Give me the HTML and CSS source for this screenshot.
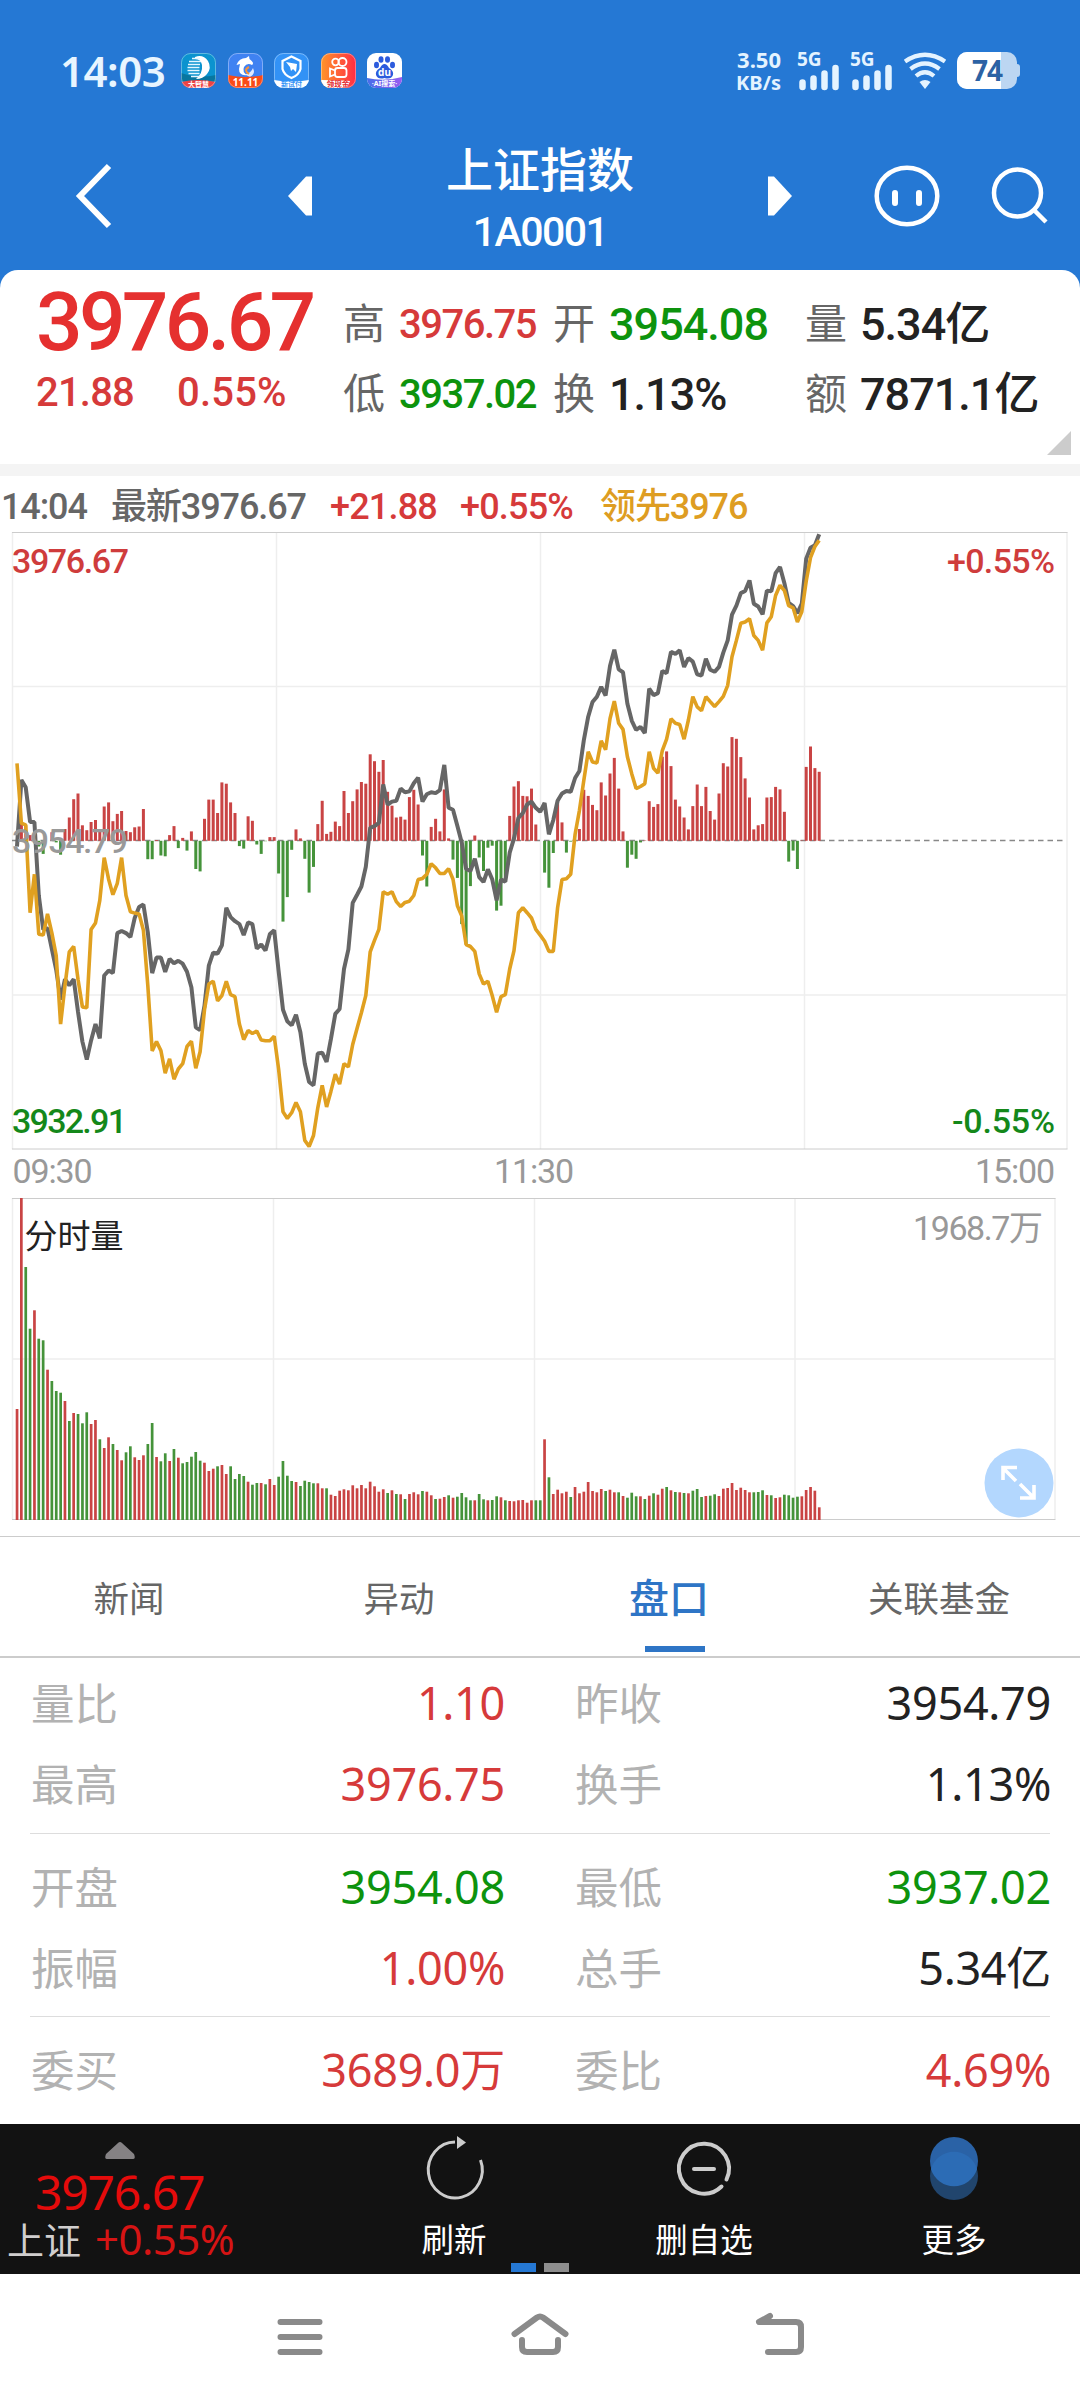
FILE: index.html
```html
<!DOCTYPE html>
<html lang="zh-CN">
<head>
    <meta charset="UTF-8">
    <meta name="viewport" content="width=device-width, initial-scale=1.0">
    <title>上证指数 1A0001</title>
    <link rel="stylesheet" href="styles.css">
</head>
<body>
    <header>
        <div class="status-bar">
            <span class="clock">14:03</span>
            <div class="app-icons">
                <svg viewBox="0 0 35 35">
                    <defs><clipPath id="round"><rect width="35" height="35" rx="9"/></clipPath></defs>
                    <g clip-path="url(#round)">
                        <rect width="35" height="35" fill="#0b93cf"/>
                        <path d="M0 20 Q17 26 35 22 V28 H0z" fill="#08769f"/>
                        <path d="M14 4 Q22 1 27 8 Q31 15 26 21 Q22 26 15 26 Q22 20 21 12 Q20 6 14 6z" fill="#fff"/>
                        <path d="M11 5.500h8M8 8.500h12M7 11.500h12M6.500 14.500h12M6.500 17.500h12M7.500 20.500h11M10 23.500h9" stroke="#e4f6ff" stroke-width="1.700"/>
                        <path d="M0 29 Q17 25 35 29 V35 H0z" fill="#ed4345"/>
                        <text x="17.500" y="33.500" class="tiny">大智慧</text>
                    </g>
                    <rect x=".5" y=".5" width="34" height="34" rx="9" class="rim"/>
                </svg>
                <svg viewBox="0 0 35 35">
                    <g clip-path="url(#round)">
                        <rect width="35" height="35" fill="#3f82f2"/>
                        <path d="M8.500 12 Q11 5 18 5 L21 3 L21.500 6 Q27 10 24 12 Q19 9.500 16 14 Q14 19 19 22 Q11 23 11 16 L12 11z" fill="#fff"/>
                        <path d="M25 15 Q28 21 22 24 L17 21.500 Q23 20 25 15z" fill="#dfe9ff"/>
                        <path d="M21 14 Q15 17 21 21" fill="none" stroke="#f7923a" stroke-width="2"/>
                        <path d="M0 22 Q17 26 35 22 V35 H0z" fill="#fa4b17"/>
                        <text x="17.500" y="32.500" class="tiny big">11.11</text>
                    </g>
                    <rect x=".5" y=".5" width="34" height="34" rx="9" class="rim"/>
                </svg>
                <svg viewBox="0 0 35 35">
                    <g clip-path="url(#round)">
                        <rect width="35" height="35" fill="#3292f6"/>
                        <path d="M17.500 3.500 L26.500 8 V16 Q25 22 17.500 25 Q10 22 8.500 16 V8z" fill="none" stroke="#fff" stroke-width="2.200"/>
                        <path d="M12 9 L23 11 L22 19 L19 16 L17 18 L16 14z" fill="#fff"/>
                        <path d="M0 27 Q17 30 35 27 V35 H0z" fill="#fff"/>
                        <text x="17.500" y="33.500" class="tiny blue">新试付</text>
                    </g>
                    <rect x=".5" y=".5" width="34" height="34" rx="9" class="rim"/>
                </svg>
                <svg viewBox="0 0 35 35">
                    <defs><linearGradient id="warm" x2="1"><stop stop-color="#ff9528"/><stop offset="1" stop-color="#ff2c45"/></linearGradient></defs>
                    <g clip-path="url(#round)">
                        <rect width="35" height="35" fill="url(#warm)"/>
                        <circle cx="14.500" cy="9" r="3.300" class="line"/>
                        <circle cx="21.500" cy="9" r="4" class="line"/>
                        <rect x="14" y="15" width="11.500" height="9" rx="2.500" class="line"/>
                        <path d="M14 17.500 L9 15.500 V23.500 L14 21.500" class="line"/>
                        <path d="M0 27 Q12 27 29 28 L26 35 H0z" fill="#fff"/>
                        <text x="17" y="33.800" class="tiny red">领现金</text>
                    </g>
                    <rect x=".5" y=".5" width="34" height="34" rx="9" class="rim"/>
                </svg>
                <svg viewBox="0 0 35 35">
                    <defs><linearGradient id="cool" x2="1"><stop stop-color="#456eea"/><stop offset="1" stop-color="#9a5cf0"/></linearGradient></defs>
                    <g clip-path="url(#round)">
                        <rect width="35" height="35" fill="#fff"/>
                        <g fill="#2c5bdd">
                            <ellipse cx="9.500" cy="12" rx="2.500" ry="3.300"/>
                            <ellipse cx="14" cy="6.500" rx="2.500" ry="3.300"/>
                            <ellipse cx="20.500" cy="6.500" rx="2.500" ry="3.300"/>
                            <ellipse cx="25.500" cy="12" rx="2.500" ry="3.300"/>
                            <path d="M17.500 11 Q20 11 22 15 Q27 18 26 22 Q24 27 17.500 25 Q11 27 9 22 Q8 18 13 15 Q15 11 17.500 11z"/>
                        </g>
                        <text x="17.500" y="22.500" class="tiny big">du</text>
                        <path d="M0 25 Q17 29 35 24 V35 H0z" fill="url(#cool)"/>
                        <text x="17.500" y="33" class="tiny">·AI搜索·</text>
                    </g>
                </svg>
            </div>
            <div class="status-right">
                <div class="speed"><span>3.50</span><span>KB/s</span></div>
                <svg class="signal" viewBox="0 0 43 40">
                    <text x="0" y="15">5G</text>
                    <path d="M5.500 31.500v4.500M16.500 27.500v8.500M27.500 22.500v13.500M38.500 17v19"/>
                </svg>
                <svg class="signal" viewBox="0 0 43 40">
                    <text x="0" y="15">5G</text>
                    <path d="M5.500 31.500v4.500M16.500 27.500v8.500M27.500 22.500v13.500M38.500 17v19"/>
                </svg>
                <svg class="wifi" viewBox="0 0 44 37">
                    <path d="M2 9.500 Q22 -4 42 9.500M7.500 17 Q22 6 36.500 17M13 24 Q22 16.500 31 24" fill="none" stroke="#e4f3ff" stroke-width="4.200"/>
                    <path d="M16.500 30 Q22 26 27.500 30 L22 37z" fill="#e4f3ff"/>
                </svg>
                <div class="battery"><span class="battery-level"></span><b>74</b></div>
            </div>
        </div>
        <div class="title-bar">
            <svg class="back" viewBox="0 0 40 66"><path d="M34 3 L5 33 L34 63"/></svg>
            <svg class="arrow prev" viewBox="0 0 24 40"><path d="M0 20 L18 .5 H24 V39.500 H18z"/></svg>
            <div class="title">
                <h1>上证指数</h1>
                <p>1A0001</p>
            </div>
            <svg class="arrow next" viewBox="0 0 24 40"><path d="M24 20 L6 .5 H0 V39.500 H6z"/></svg>
            <svg class="robot" viewBox="0 0 66 62">
                <ellipse cx="33" cy="31" rx="30.300" ry="28.300"/>
                <path d="M21 28v10M45 28v10"/>
            </svg>
            <svg class="search" viewBox="0 0 58 60"><circle cx="26.500" cy="27" r="23.500"/><path d="M42.500 43.500 L55 56"/></svg>
        </div>
    </header>

    <section class="quote">
        <div class="quote-main">
            <div class="price">3976.67</div>
            <div class="change"><span>21.88</span><span class="percent">0.55%</span></div>
        </div>
        <dl class="quote-grid">
            <dt>高</dt><dd class="up small">3976.75</dd>
            <dt>开</dt><dd class="down">3954.08</dd>
            <dt>量</dt><dd>5.34亿</dd>
            <dt>低</dt><dd class="down small">3937.02</dd>
            <dt>换</dt><dd>1.13%</dd>
            <dt>额</dt><dd>7871.1亿</dd>
        </dl>
        <svg class="expand-corner" viewBox="0 0 24 24"><path d="M24 0 V24 H0z"/></svg>
    </section>

    <div class="chart-info">
        <span>14:04</span>
        <span>最新3976.67</span>
        <span class="up">+21.88</span>
        <span class="up">+0.55%</span>
        <span class="info-lead">领先3976</span>
    </div>

    <svg class="price-chart" viewBox="0 532 1080 658">
        <path class="grid-line" d="M12.500 686.500H1067M12.500 995H1067M12.500 532V1149M276.500 532V1149M540.500 532V1149M804.500 532V1149M1067 532V1149"/>
        <path class="frame-line" d="M12 532.500H1067.500M12 1149H1067.500"/>
        <path class="zero-line" d="M12 840.500H1063"/>
        <g id="momentum"></g>
        <polyline id="priceLine" class="price-line"/>
        <polyline id="leadLine" class="lead-line"/>
        <text x="12" y="573" textLength="117" class="red">3976.67</text>
        <text x="12" y="852.500" textLength="116" class="gray">3954.79</text>
        <text x="12" y="1132.500" textLength="115" class="green">3932.91</text>
        <text x="947" y="573" textLength="108" class="red">+0.55%</text>
        <text x="952" y="1132.500" textLength="103" class="green">-0.55%</text>
        <text x="12.500" y="1182.500" textLength="80" class="axis">09:30</text>
        <text x="494" y="1182.500" textLength="80" class="axis">11:30</text>
        <text x="975" y="1182.500" textLength="80" class="axis">15:00</text>
    </svg>

    <svg class="volume-chart" viewBox="0 1190 1080 346">
        <path class="grid-line" d="M12.500 1359H1055M12.500 1198V1519M273.500 1198V1519M534.500 1198V1519M795 1198V1519M1055 1198V1519"/>
        <path class="frame-line" d="M12 1198.500H1055.500M12 1519.500H1055.500"/>
        <g id="volume"></g>
        <text x="24.500" y="1247.500" class="label">分时量</text>
        <text x="913" y="1239.500" textLength="130" class="axis">1968.7万</text>
        <circle cx="1019" cy="1483" r="34.500" fill="#b3d7fe"/>
        <path class="zoom-arrows" d="M1003 1480V1467.500H1017M1003 1468L1016 1481M1034 1485V1498H1020M1034 1498L1020 1484"/>
    </svg>

    <nav class="tabs">
        <a href="#">新闻</a>
        <a href="#">异动</a>
        <a href="#" class="active">盘口</a>
        <a href="#">关联基金</a>
    </nav>

    <main>
        <div class="rows">
            <span>量比</span><b class="up">1.10</b><span>昨收</span><b>3954.79</b>
            <span>最高</span><b class="up">3976.75</b><span>换手</span><b>1.13%</b>
        </div>
        <div class="rows">
            <span>开盘</span><b class="down">3954.08</b><span>最低</span><b class="down">3937.02</b>
            <span>振幅</span><b class="up">1.00%</b><span>总手</span><b>5.34亿</b>
        </div>
        <div class="rows">
            <span>委买</span><b class="up">3689.0万</b><span>委比</span><b class="up">4.69%</b>
        </div>
    </main>

    <footer class="toolbar">
        <div class="index-box">
            <svg viewBox="0 0 30 17"><path d="M15 0 Q16 0 17 1 L29 12 Q31 17 28 17 H2 Q-1 17 1 12 L13 1 Q14 0 15 0z" fill="#858284"/></svg>
            <strong>3976.67</strong>
            <p>上证<span>+0.55%</span></p>
        </div>
        <div class="tool">
            <svg viewBox="0 0 62 66">
                <path d="M32 5 A27 28 0 1 0 57.500 23" fill="none" stroke="#ccc" stroke-width="3"/>
                <path d="M34 -1 L43 5.500 L34 12z" fill="#ccc"/>
            </svg>
            <span>刷新</span>
        </div>
        <div class="tool">
            <svg viewBox="0 0 62 66">
                <path d="M53.500 42.500 A25 25 0 1 0 48.500 49.500" fill="none" stroke="#ccc" stroke-width="4" stroke-linecap="round"/>
                <path d="M21 32 H41" stroke="#ccc" stroke-width="4" stroke-linecap="round"/>
            </svg>
            <span>删自选</span>
        </div>
        <div class="tool">
            <svg viewBox="0 0 62 66">
                <circle cx="31" cy="39" r="24" fill="#21456d"/>
                <circle cx="31" cy="24" r="24" fill="#2a62a6"/>
                <path d="M8 32 A24 24 0 0 1 54 32 A24 24 0 0 1 8 32z" fill="#2c6cb5"/>
            </svg>
            <span>更多</span>
        </div>
        <div class="pager"><i class="on"></i><i></i></div>
    </footer>

    <div class="system-nav">
        <svg viewBox="0 0 60 50"><path d="M10.500 10H49.500M10.500 25H49.500M10.500 40H49.500"/></svg>
        <svg viewBox="0 0 60 50"><path d="M4.500 22 L27 5.500 Q30 3.500 33 5.500 L55.500 22M12 28V35Q12 40 17 40H43Q48 40 48 35V28"/></svg>
        <svg viewBox="0 0 60 50"><path d="M20 4 L9 10 H46Q51 10 51 15V35Q51 40 46 40H18"/></svg>
    </div>

    <script src="chart.js"></script>
</body>
</html>
```

FILE: styles.css
```css
* {
    box-sizing: border-box;
}
body {
    margin: 0;
    width: 1080px;
    height: 2400px;
    background-color: #fff;
    color: #222;
    font-family: "Noto Sans", "Noto Sans CJK SC", sans-serif;
    overflow: hidden;
}
svg {
    display: block;
    flex: none;
    overflow: visible;
}
h1, p, dl, dd {
    margin: 0;
}
header {
    height: 290px;
    background-color: #2578d4;
    color: #fff;
}
.up {
    color: #d63a3a;
}
.down {
    color: #0d930d;
}

/* status bar */
.status-bar {
    display: flex;
    align-items: center;
    height: 141px;
    padding: 0 63px 0 60px;
}
.clock {
    width: 121px;
    font-size: 42px;
    font-weight: 600;
    letter-spacing: -0.5px;
    color: #e8f5ff;
}
.app-icons {
    display: flex;
    gap: 11.600px;
}
.app-icons svg {
    width: 35px;
    height: 35px;
}
.tiny {
    font-size: 7px;
    font-weight: 700;
    fill: #fff;
    text-anchor: middle;
}
.tiny.big {
    font-size: 10px;
}
.tiny.blue {
    fill: #3292f6;
}
.tiny.red {
    font-size: 7.5px;
    fill: #e3262c;
}
.line {
    fill: none;
    stroke: #fff;
    stroke-width: 1.8;
}
.rim {
    fill: none;
    stroke: rgba(255, 255, 255, 0.35);
}
.status-right {
    display: flex;
    align-items: center;
    margin-left: auto;
}
.speed {
    display: flex;
    flex-direction: column;
    width: 60px;
    margin-right: 16px;
    text-align: right;
    font-size: 20px;
    font-weight: 700;
    line-height: 23px;
    color: #e4f3ff;
}
.speed span:first-child {
    font-size: 22px;
}
.signal {
    width: 43px;
    height: 40px;
    margin-right: 10px;
}
.signal text {
    font-size: 19px;
    font-weight: 700;
    fill: #e4f3ff;
}
.signal path {
    stroke: #e4f3ff;
    stroke-width: 6.5;
    stroke-linecap: round;
}
.wifi {
    width: 44px;
    height: 37px;
    margin-right: 10px;
}
.battery {
    position: relative;
    width: 60px;
    height: 37px;
    border-radius: 10px;
    background-color: #bcd6f2;
    text-align: center;
    line-height: 37px;
    font-size: 28px;
    color: #2c62a4;
}
.battery b {
    position: relative;
    font-weight: 700;
    letter-spacing: -1px;
}
.battery-level {
    position: absolute;
    left: 0;
    top: 0;
    width: 44px;
    height: 37px;
    border-radius: 10px 0 0 10px;
    background-color: #fff;
}
.battery::after {
    content: "";
    position: absolute;
    right: -3px;
    top: 12px;
    width: 4px;
    height: 13px;
    border-radius: 0 3px 3px 0;
    background-color: #bcd6f2;
}

/* title */
.title-bar {
    display: flex;
    align-items: center;
    height: 109px;
    padding-left: 75px;
}
.back {
    width: 40px;
    height: 66px;
}
.back path, .robot ellipse, .robot path, .search circle, .search path {
    fill: none;
    stroke: #fff;
    stroke-width: 4.5;
}
.back path {
    stroke-width: 6;
}
.robot path {
    stroke-width: 6;
    stroke-linecap: round;
}
.arrow {
    width: 24px;
    height: 40px;
    fill: #fff;
}
.prev {
    margin-left: 173px;
}
.title {
    width: 456px;
    padding-top: 13px;
    text-align: center;
}
.title h1 {
    font-size: 47px;
    font-weight: 500;
    line-height: 60px;
}
.title p {
    font-family: Roboto, sans-serif;
    font-size: 41px;
    font-weight: 500;
    line-height: 66px;
    letter-spacing: -1.5px;
}
.robot {
    width: 66px;
    height: 62px;
    margin-left: 82px;
}
.search {
    width: 58px;
    height: 60px;
    margin-left: 51px;
}

/* quote card */
.quote {
    position: relative;
    display: flex;
    height: 206px;
    margin-top: -20px;
    padding-left: 36px;
    border-bottom: 12px solid #f4f4f4;
    border-radius: 18px 18px 0 0;
    background-color: #fff;
    font-family: Roboto, "Noto Sans CJK SC", sans-serif;
    font-weight: 500;
}
.quote-main {
    width: 307px;
}
.price {
    height: 93px;
    padding-top: 6px;
    font-size: 82px;
    line-height: 92px;
    letter-spacing: -3.7px;
    color: #e5302f;
}
.change {
    display: grid;
    grid-template-columns: 141px auto;
    height: 60px;
    font-size: 40px;
    line-height: 60px;
    letter-spacing: -0.8px;
    color: #d63a3a;
}
.percent {
    letter-spacing: 0.2px;
}
.quote-grid {
    display: grid;
    grid-template-columns: 56px 154px 56px 196px 55px auto;
    grid-template-rows: 70px 70px;
    padding-top: 20px;
    font-size: 45px;
    line-height: 70px;
    white-space: nowrap;
}
.quote-grid dt {
    font-size: 42px;
    font-weight: 400;
    color: #666;
}
.quote-grid dd {
    letter-spacing: -1px;
}
.quote-grid .small {
    font-size: 40px;
    letter-spacing: -1.5px;
}
.expand-corner {
    position: absolute;
    right: 9px;
    bottom: 9px;
    width: 24px;
    height: 24px;
    fill: #ccc;
}

/* charts */
.chart-info {
    display: grid;
    grid-template-columns: 110px 219px 130px 140px auto;
    height: 56px;
    padding-left: 1px;
    font-family: Roboto, "Noto Sans CJK SC", sans-serif;
    font-size: 36px;
    font-weight: 500;
    line-height: 63px;
    letter-spacing: -1.1px;
    color: #666;
    white-space: nowrap;
}
.chart-info .up {
    letter-spacing: -0.8px;
}
.info-lead {
    color: #de9d22;
}
.price-chart {
    width: 1080px;
    height: 658px;
}
.volume-chart {
    width: 1080px;
    height: 346px;
}
.price-chart text, .volume-chart text {
    font-family: Roboto, "Noto Sans CJK SC", sans-serif;
    font-size: 34px;
}
.price-chart .red, .price-chart .green {
    font-weight: 500;
    fill: #cf3c3c;
}
.price-chart .green {
    fill: #14881a;
}
.price-chart .gray, .axis {
    fill: #999;
}
.price-chart .gray {
    font-weight: 500;
}
.volume-chart .label {
    font-size: 33px;
    fill: #222;
}
.grid-line {
    stroke: #eee;
    stroke-width: 1.5;
}
.frame-line {
    stroke: #ccc;
}
.zero-line {
    stroke: #888;
    stroke-width: 1.5;
    stroke-dasharray: 5.5 4;
}
.price-line, .lead-line {
    fill: none;
    stroke: #666;
    stroke-width: 4;
    stroke-linejoin: bevel;
}
.lead-line {
    stroke: #e0a020;
    stroke-width: 3.6;
}
.rise {
    fill: #c94444;
}
.fall {
    fill: #45933a;
}
.zoom-arrows {
    fill: none;
    stroke: #fff;
    stroke-width: 3.6;
}

/* tabs */
.tabs {
    display: grid;
    grid-template-columns: repeat(4, 270px);
    height: 122px;
    border-top: 1.5px solid #ccc;
    border-bottom: 2px solid #ccc;
}
.tabs a {
    position: relative;
    padding-right: 12px;
    text-align: center;
    text-decoration: none;
    font-size: 35.500px;
    line-height: 122px;
    color: #666;
}
.tabs .active {
    font-size: 40px;
    font-weight: 500;
    color: #2e75c6;
}
.tabs .active::after {
    content: "";
    position: absolute;
    left: 105px;
    bottom: 7px;
    width: 60px;
    height: 6px;
    background-color: #2e75c6;
}

/* data rows */
main {
    height: 466px;
    padding: 0 30px;
}
.rows {
    display: grid;
    grid-template-columns: 120px 354px 180px 366px;
    grid-auto-rows: 81px;
    height: 183px;
    padding: 16px 0 0 1px;
    font-size: 43.500px;
    line-height: 74px;
    border-bottom: 1.5px solid #ddd;
}
.rows:first-child {
    height: 176px;
    padding-top: 8px;
}
.rows:last-child {
    border: 0;
}
.rows span {
    color: #b2b2b2;
}
.rows span:nth-child(4n + 3) {
    padding-left: 70px;
}
.rows b {
    font-size: 45px;
    font-weight: 400;
    letter-spacing: -0.3px;
    text-align: right;
    white-space: nowrap;
}

/* bottom toolbar */
.toolbar {
    position: relative;
    display: flex;
    height: 150px;
    background-color: #121212;
    color: #fff;
}
.index-box {
    width: 329px;
    padding-top: 18px;
}
.index-box svg {
    width: 30px;
    height: 17px;
    margin-left: 105px;
}
.index-box strong {
    display: block;
    height: 58px;
    margin-left: 35px;
    font-size: 48px;
    font-weight: 400;
    line-height: 66px;
    letter-spacing: -1.2px;
    color: #e50b0b;
}
.index-box p {
    margin-left: 7px;
    font-size: 37px;
    line-height: 44px;
    color: #d0cece;
}
.index-box p span {
    margin-left: 14px;
    font-size: 42px;
    letter-spacing: -0.5px;
    color: #d61414;
}
.tool {
    display: flex;
    flex-direction: column;
    align-items: center;
    width: 250px;
    padding-top: 13px;
    font-size: 32.500px;
    line-height: 40px;
}
.tool svg {
    width: 62px;
    height: 66px;
    margin-bottom: 17px;
}
.pager {
    position: absolute;
    left: 511px;
    bottom: 2px;
    display: flex;
    gap: 8px;
}
.pager i {
    width: 25px;
    height: 9px;
    background-color: #8e8e8e;
}
.pager .on {
    background-color: #2578d4;
}

/* system navigation */
.system-nav {
    display: flex;
    justify-content: center;
    gap: 180px;
    padding-top: 38px;
}
.system-nav svg {
    width: 60px;
    height: 50px;
    fill: none;
    stroke: #8a8a8a;
    stroke-width: 6;
    stroke-linecap: round;
    stroke-linejoin: round;
}
```

FILE: chart.js
```js
// one point per trading minute, distance below the top of the price chart
const price = [
    800, 637, 655, 740, 740, 920, 1003, 1000, 1052, 1102, 1175, 1125, 1140, 1125, 1205, 1278, 1322, 1275, 1235, 1270,
    1116, 1104, 1110, 1012, 1007, 1012, 1022, 975, 948, 942, 1010, 1110, 1072, 1072, 1107, 1075, 1086, 1080, 1087, 1107,
    1145, 1243, 1250, 1190, 1092, 1060, 1062, 1042, 950, 973, 983, 990, 1017, 986, 990, 1050, 1040, 1055, 1014, 1005,
    1105, 1200, 1228, 1238, 1212, 1255, 1332, 1377, 1385, 1307, 1305, 1328, 1272, 1210, 1198, 1100, 1052, 938, 918, 898,
    850, 754, 750, 742, 648, 697, 690, 688, 658, 667, 665, 645, 631, 690, 672, 667, 669, 662, 600, 705,
    710, 750, 790, 855, 860, 830, 875, 887, 856, 880, 932, 881, 886, 815, 780, 730, 718, 697, 690, 705,
    715, 693, 770, 735, 688, 670, 664, 666, 632, 615, 540, 482, 446, 433, 409, 430, 358, 318, 366, 373,
    450, 492, 514, 507, 522, 413, 429, 424, 370, 375, 323, 328, 319, 360, 338, 347, 378, 381, 340, 367,
    372, 360, 325, 295, 232, 210, 179, 174, 148, 205, 212, 231, 173, 175, 130, 115, 155, 203, 211, 228,
    205, 95, 68, 62, 35
];

const lead = [
    596, 743, 747, 962, 868, 1015, 1017, 965, 1012, 1067, 1235, 1140, 1058, 1045, 1125, 1193, 1195, 1003, 987, 932,
    827, 880, 918, 890, 827, 920, 960, 963, 965, 1005, 1140, 1301, 1278, 1300, 1355, 1320, 1370, 1345, 1332, 1290,
    1277, 1343, 1303, 1200, 1137, 1130, 1178, 1165, 1130, 1163, 1168, 1235, 1273, 1251, 1258, 1252, 1274, 1276, 1276, 1265,
    1345, 1450, 1466, 1452, 1427, 1450, 1520, 1535, 1508, 1440, 1385, 1438, 1400, 1358, 1382, 1332, 1340, 1285, 1245, 1207,
    1165, 1058, 1030, 1003, 911, 917, 911, 935, 947, 937, 934, 920, 881, 878, 868, 842, 852, 866, 866, 854,
    880, 945, 970, 1040, 1045, 1057, 1112, 1137, 1130, 1165, 1206, 1168, 1163, 1100, 1055, 962, 950, 962, 975, 1003,
    1017, 1032, 1057, 1057, 950, 881, 879, 868, 770, 712, 638, 568, 593, 595, 541, 563, 487, 444, 498, 513,
    580, 622, 658, 653, 646, 568, 608, 620, 565, 537, 487, 498, 501, 537, 490, 433, 458, 467, 433, 445,
    457, 445, 432, 405, 335, 295, 253, 250, 242, 283, 295, 319, 252, 237, 185, 160, 173, 210, 215, 250,
    225, 150, 92, 65, 50
];

// positive bars go up in red, negative go down in green
const momentum = [
    0, 41, 38, 14, 16, -14, -32, 0, 21, -4, -34, 29, 57, 102, 116, 38, 26, 46, 51, 29,
    84, 94, 48, 66, 73, 24, 21, 33, 35, 78, -45, -45, 2, -36, -38, 14, 36, -18, 7, -24,
    23, -69, -75, 54, 101, 101, 68, 143, 140, 94, 68, -13, -19, 60, 49, -9, -32, -1, 9, 9,
    -80, -198, -138, -22, 28, 6, -44, -127, -64, 41, 98, 17, 22, 47, 36, 122, 68, 97, 126, 144,
    140, 212, 195, 169, 198, 120, 86, 57, 59, 52, 107, 125, 89, -36, -112, 34, 54, 23, 126, 6,
    -46, -91, -204, -254, -111, 13, -41, -74, -17, -12, -171, -159, -99, 61, 133, 146, 110, 109, 128, 40,
    0, -78, -115, -30, 96, 45, -29, -2, 0, 29, 125, 110, 88, 75, 143, 111, 165, 203, 128, 23,
    -66, -34, -44, -4, 1, 97, 83, 90, 206, 219, 183, 101, 84, 57, 28, 85, 138, 85, 132, 73,
    52, 116, 190, 182, 254, 250, 205, 153, 106, 28, 38, 41, 106, 107, 132, 126, 71, -51, -24, -69,
    1, 181, 231, 178, 169
];

// minute volume, negative when the minute closed lower
const volume = [
    333, 966, -759, -574, 629, -544, -539, 451, -417, -387, -382, 357, -297, 321, -318, -290, -323, 288, 300, -242,
    216, 248, -228, 210, 179, -203, -221, 188, 180, 194, -228, -291, 189, -176, -200, 177, -213, 187, -170, -174,
    -190, -204, -178, 172, 147, 154, -161, 165, 138, -161, -123, -138, -132, 115, -106, -111, 111, -107, 123, 105,
    -130, -177, -133, -117, 114, -102, -118, -114, -110, 110, 95, -95, 76, 72, 88, 92, 89, 104, 95, 105,
    95, 115, 101, 85, 92, -81, 89, -78, 77, -63, 78, 83, 77, -87, 85, 74, -63, 64, 69, -74,
    67, -70, -81, -68, -59, 59, -78, -62, 59, -60, -71, 68, -59, 57, 56, 59, 60, 52, 59, -59,
    -59, 242, -128, 78, 91, 80, 85, -69, 99, 80, 85, 114, 87, 83, 93, -87, 91, 83, -83, 72,
    -67, -82, -71, 71, -63, 73, -80, 76, 94, -99, 89, -84, 83, -81, 80, -88, -93, -69, 72, -73,
    -77, 72, 94, 96, 111, 90, 97, 90, 83, -83, -84, -89, 75, -74, 66, 68, -76, -74, -67, -70,
    71, 90, 99, 88, 38
];

const startX = 17;
const stepX = 4.36;
const scale = 1 / 2.45;

function drawLine(id, data) {
    const points = data.map((v, i) => (startX + i * stepX).toFixed(1) + ',' + (520 + v * scale).toFixed(1));
    document.getElementById(id).setAttribute('points', points.join(' '));
}

function drawBars(id, data, base, ratio, width, flip) {
    let html = '';
    data.forEach((v, i) => {
        const h = Math.abs(v) * ratio;
        const y = v < 0 && flip ? base : base - h;
        const x = startX + i * stepX - width / 2;
        html += `<rect class="${v < 0 ? 'fall' : 'rise'}" x="${x.toFixed(1)}" y="${y.toFixed(1)}" width="${width}" height="${h.toFixed(1)}"/>`;
    });
    document.getElementById(id).innerHTML = html;
}

drawBars('momentum', momentum, 840.8, scale, 3, true);
drawLine('priceLine', price);
drawLine('leadLine', lead);
drawBars('volume', volume, 1520, 1 / 3, 2.7, false);
```
